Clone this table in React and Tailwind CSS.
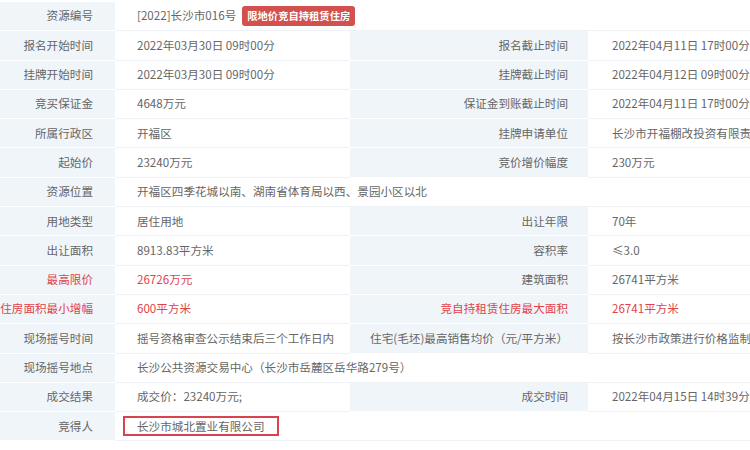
import React from 'react'

const rows = [
  { label: '资源编号', value: '[2022]长沙市016号', badge: '限地价竞自持租赁住房', span: true },
  { label: '报名开始时间', value: '2022年03月30日 09时00分', label2: '报名截止时间', value2: '2022年04月11日 17时00分' },
  { label: '挂牌开始时间', value: '2022年03月30日 09时00分', label2: '挂牌截止时间', value2: '2022年04月12日 09时00分' },
  { label: '竞买保证金', value: '4648万元', label2: '保证金到账截止时间', value2: '2022年04月11日 17时00分' },
  { label: '所属行政区', value: '开福区', label2: '挂牌申请单位', value2: '长沙市开福棚改投资有限责任公司' },
  { label: '起始价', value: '23240万元', label2: '竞价增价幅度', value2: '230万元' },
  { label: '资源位置', value: '开福区四季花城以南、湖南省体育局以西、景园小区以北', span: true },
  { label: '用地类型', value: '居住用地', label2: '出让年限', value2: '70年' },
  { label: '出让面积', value: '8913.83平方米', label2: '容积率', value2: '≤3.0' },
  { label: '最高限价', value: '26726万元', label2: '建筑面积', value2: '26741平方米', red: true },
  { label: '竞自持租赁住房面积最小增幅', value: '600平方米', label2: '竞自持租赁住房最大面积', value2: '26741平方米', red: true, red2: true },
  { label: '现场摇号时间', value: '摇号资格审查公示结束后三个工作日内', label2: '住宅(毛坯)最高销售均价（元/平方米）', value2: '按长沙市政策进行价格监制' },
  { label: '现场摇号地点', value: '长沙公共资源交易中心（长沙市岳麓区岳华路279号）', span: true },
  { label: '成交结果', value: '成交价：23240万元;', label2: '成交时间', value2: '2022年04月15日 14时39分' },
  { label: '竞得人', value: '长沙市城北置业有限公司', span: true, boxed: true },
]

const labelCls = 'flex items-center justify-end whitespace-nowrap bg-[#f0f5fa] border-b border-white'
const valueCls = 'flex items-center whitespace-nowrap bg-white border-b border-[#eef1f5] overflow-hidden'

const App = () => {
  return (
    <div
      className="w-[750px] h-[450px] overflow-hidden bg-white pt-[2px] text-[11.6px] text-[#666666]"
      style={{ fontFamily: '"Noto Sans CJK SC", "Noto Sans", sans-serif' }}
    >
      <div className="grid grid-cols-[115px_235px_238px_300px]">
        {rows.map((r) => (
          <React.Fragment key={r.label}>
            <div className={`${labelCls} h-[29.3px] pr-[22px] ${r.red ? 'text-[#e2434b]' : ''}`}>
              {r.label}
            </div>
            {r.span ? (
              <div className={`${valueCls} col-span-3 pl-[22px]`}>
                {r.boxed ? (
                  <span className="-ml-[14px] inline-flex h-[20px] items-center border-2 border-[#d8434f] pl-[12px] pr-[12px]">
                    {r.value}
                  </span>
                ) : (
                  <span>{r.value}</span>
                )}
                {r.badge && (
                  <span className="ml-[6px] inline-flex h-[20px] items-center rounded-[3px] bg-[#d2504e] px-[5px] text-[10.3px] font-bold text-white">
                    {r.badge}
                  </span>
                )}
              </div>
            ) : (
              <>
                <div className={`${valueCls} pl-[22px] ${r.red ? 'text-[#e2434b]' : ''}`}>
                  {r.value}
                </div>
                <div className={`${labelCls} pr-[20px] ${r.red2 ? 'text-[#e2434b]' : ''}`}>
                  {r.label2}
                </div>
                <div className={`${valueCls} pl-[24px] ${r.red2 ? 'text-[#e2434b]' : ''}`}>
                  {r.value2}
                </div>
              </>
            )}
          </React.Fragment>
        ))}
      </div>
    </div>
  )
}

export default App
